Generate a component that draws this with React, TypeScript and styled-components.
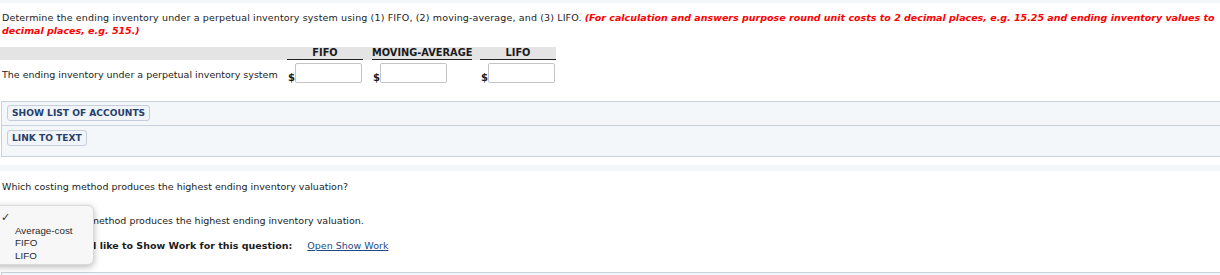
import React from "react";
import styled, { createGlobalStyle } from "styled-components";

const GlobalStyle = createGlobalStyle`
  html, body {
    margin: 0;
    padding: 0;
    overflow: hidden;
    background: #fff;
  }
  body {
    font-family: "DejaVu Sans", Verdana, sans-serif;
    font-size: 9.5px;
    color: #1c1c1c;
  }
`;

const Page = styled.div`
  position: relative;
  width: 1220px;
  height: 275px;
  overflow: hidden;
`;

const Strip = styled.div<{ $h: number; $mt?: number }>`
  height: ${(p) => p.$h}px;
  margin-top: ${(p) => p.$mt ?? 0}px;
  background: #f4f7fa;
`;

const Instructions = styled.p`
  margin: 0;
  padding: 8px 2px 0;
  line-height: 13px;
  white-space: nowrap;
`;

const Lead = styled.span`
  letter-spacing: 0.14px;
`;

const Hint = styled.em`
  color: #f00;
  font-weight: bold;
  font-style: italic;
`;

const TableRow = styled.div<{ $head?: boolean }>`
  display: flex;
  width: 556px;
  height: ${(p) => (p.$head ? 13 : 24)}px;
  margin-top: ${(p) => (p.$head ? 10 : 0)}px;
  background: ${(p) => (p.$head ? "#e4e4e4" : "transparent")};
`;

const LabelCell = styled.div`
  flex: none;
  width: 285px;
  align-self: flex-end;
  padding: 0 0 3px 2px;
  line-height: 13px;
  white-space: nowrap;
`;

const HeadCell = styled.div<{ $w: number; $ml: number }>`
  flex: none;
  box-sizing: border-box;
  width: ${(p) => p.$w}px;
  margin-left: ${(p) => p.$ml}px;
  border-bottom: 1px solid #222;
  font-weight: bold;
  font-size: 9.8px;
  line-height: 12px;
  text-align: center;
  color: #1a1a1a;
  white-space: nowrap;
`;

const AmountCell = styled.div<{ $w: number; $ml: number }>`
  flex: none;
  display: flex;
  align-items: flex-end;
  box-sizing: border-box;
  width: ${(p) => p.$w}px;
  margin-left: ${(p) => p.$ml}px;
  padding: 0 0 1px 1px;
`;

const Dollar = styled.span`
  flex: none;
  width: 7px;
  font-weight: bold;
  font-size: 10px;
  line-height: 10px;
`;

const AmountInput = styled.input`
  flex: none;
  box-sizing: border-box;
  width: 67px;
  height: 20px;
  margin: 0;
  padding: 0 3px;
  border: 1px solid #c4c4c4;
  border-radius: 2px;
  background: #fff;
  font: inherit;
`;

const ToolBox = styled.div`
  margin: 17px -4px 0 1px;
  border: 1px solid #c8d2dd;
  background: #f4f7fa;
`;

const ToolRow = styled.div<{ $pt: number; $pb: number; $sep?: boolean }>`
  padding: ${(p) => p.$pt}px 5px ${(p) => p.$pb}px;
  border-top: ${(p) => (p.$sep ? "1px solid #c8d2dd" : "none")};
`;

const ToolButton = styled.button`
  box-sizing: border-box;
  height: 16px;
  margin: 0;
  padding: 0 4px;
  display: block;
  border: 1px solid #c5cfdb;
  border-radius: 3px;
  background: #f1f4f8;
  color: #25406d;
  font-family: "DejaVu Sans", Verdana, sans-serif;
  font-weight: bold;
  font-size: 9.1px;
  line-height: 14px;
  white-space: nowrap;
`;

const Line = styled.div<{ $mt: number }>`
  margin-top: ${(p) => p.$mt}px;
  padding-left: 2px;
  line-height: 13px;
  white-space: nowrap;
`;

const SelectStub = styled.span`
  display: inline-block;
  box-sizing: border-box;
  width: 66px;
  height: 12px;
  margin: 0 3px 0 1px;
  vertical-align: middle;
  border: 1px solid #aaa;
  border-radius: 3px;
  background: #fff;
`;

const Strong = styled.b`
  font-weight: bold;
`;

const WorkLink = styled.a`
  margin-left: 15px;
  color: #1f4b84;
  text-decoration: underline;
  cursor: pointer;
`;

const BottomBox = styled.div`
  margin: 20px -4px 0 1px;
  height: 20px;
  border: 1px solid #c8d2dd;
  background: #f4f7fa;
`;

const Menu = styled.div`
  position: absolute;
  top: 205px;
  left: -8px;
  box-sizing: border-box;
  width: 102px;
  height: 60px;
  padding: 6px 0 0 8px;
  background: #f7f7f7;
  border: 1px solid rgba(0, 0, 0, 0.12);
  border-radius: 6px;
  box-shadow: 0 2px 7px rgba(0, 0, 0, 0.28);
  font-family: "Liberation Sans", Arial, sans-serif;
  font-size: 9.8px;
  color: #2a2a2a;
`;

const Option = styled.div`
  display: grid;
  grid-template-columns: 14px 1fr;
  height: 12.5px;
  line-height: 12.5px;
  white-space: nowrap;
`;

const Check = styled.span`
  font-family: "DejaVu Sans", sans-serif;
  font-size: 11px;
  color: #333;
`;

const options = ["", "Average-cost", "FIFO", "LIFO"];
const columns = [
  { name: "FIFO", w: 76, ml: 0 },
  { name: "MOVING-AVERAGE", w: 100, ml: 9 },
  { name: "LIFO", w: 76, ml: 8 },
];

const App = () => {
  return (
    <Page>
      <GlobalStyle />
      <Strip $h={3} />
      <Instructions>
        <Lead>
          Determine the ending inventory under a perpetual inventory system using (1) FIFO, (2)
          moving-average, and (3) LIFO.
        </Lead>{" "}
        <Hint>
          (For calculation and answers purpose round unit costs to 2 decimal places, e.g. 15.25
          and ending inventory values to
          <br />
          decimal places, e.g. 515.)
        </Hint>
      </Instructions>

      <TableRow $head>
        <LabelCell />
        {columns.map((c) => (
          <HeadCell key={c.name} $w={c.w} $ml={c.ml}>
            {c.name}
          </HeadCell>
        ))}
      </TableRow>
      <TableRow>
        <LabelCell>The ending inventory under a perpetual inventory system</LabelCell>
        {columns.map((c) => (
          <AmountCell key={c.name} $w={c.w} $ml={c.ml}>
            <Dollar>$</Dollar>
            <AmountInput type="text" aria-label={c.name} />
          </AmountCell>
        ))}
      </TableRow>

      <ToolBox>
        <ToolRow $pt={3} $pb={4}>
          <ToolButton>SHOW LIST OF ACCOUNTS</ToolButton>
        </ToolRow>
        <ToolRow $pt={4} $pb={10} $sep>
          <ToolButton>LINK TO TEXT</ToolButton>
        </ToolRow>
      </ToolBox>

      <Strip $h={6} $mt={8} />
      <Line $mt={9}>Which costing method produces the highest ending inventory valuation?</Line>
      <Line $mt={21}>
        The
        <SelectStub />
        method produces the highest ending inventory valuation.
      </Line>
      <Line $mt={11}>
        <Strong>Click if you would like to Show Work for this question:</Strong>
        <WorkLink>Open Show Work</WorkLink>
      </Line>
      <BottomBox />

      <Menu>
        {options.map((o, i) => (
          <Option key={i}>
            <Check>{i === 0 ? "✓" : ""}</Check>
            <span>{o}</span>
          </Option>
        ))}
      </Menu>
    </Page>
  );
};

export default App;
